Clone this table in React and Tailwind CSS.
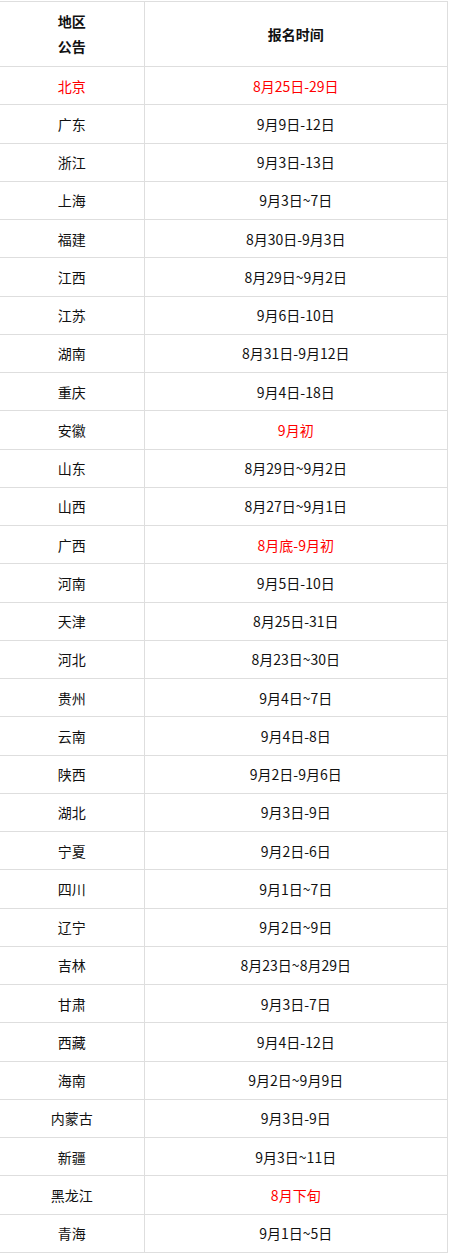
const rows = [
  ['北京', '8月25日-29日', true],
  ['广东', '9月9日-12日'],
  ['浙江', '9月3日-13日'],
  ['上海', '9月3日~7日'],
  ['福建', '8月30日-9月3日'],
  ['江西', '8月29日~9月2日'],
  ['江苏', '9月6日-10日'],
  ['湖南', '8月31日-9月12日'],
  ['重庆', '9月4日-18日'],
  ['安徽', '9月初', 'date'],
  ['山东', '8月29日~9月2日'],
  ['山西', '8月27日~9月1日'],
  ['广西', '8月底-9月初', 'date'],
  ['河南', '9月5日-10日'],
  ['天津', '8月25日-31日'],
  ['河北', '8月23日~30日'],
  ['贵州', '9月4日~7日'],
  ['云南', '9月4日-8日'],
  ['陕西', '9月2日-9月6日'],
  ['湖北', '9月3日-9日'],
  ['宁夏', '9月2日-6日'],
  ['四川', '9月1日~7日'],
  ['辽宁', '9月2日~9日'],
  ['吉林', '8月23日~8月29日'],
  ['甘肃', '9月3日-7日'],
  ['西藏', '9月4日-12日'],
  ['海南', '9月2日~9月9日'],
  ['内蒙古', '9月3日-9日'],
  ['新疆', '9月3日~11日'],
  ['黑龙江', '8月下旬', 'date'],
  ['青海', '9月1日~5日'],
]

export default function App() {
  return (
    <div className="bg-white w-[452px] min-h-[1255px] pt-px font-['Noto_Sans_CJK_SC',sans-serif] text-[14px] text-[#111]">
      <table className="w-[448px] border-collapse table-fixed">
        <colgroup>
          <col className="w-[144px]" />
          <col />
        </colgroup>
        <thead>
          <tr className="h-[65px]">
            <th className="border-t border-r border-b border-[#dedede] font-bold leading-[25px] text-center">
              地区<br />公告
            </th>
            <th className="border-t border-r border-b border-[#dedede] font-bold text-center">报名时间</th>
          </tr>
        </thead>
        <tbody>
          {rows.map(([area, date, red]) => (
            <tr key={area} className="h-[38.25px]">
              <td className={`border-r border-b border-[#dedede] text-center pt-px ${red === true ? 'text-[#ff0000]' : ''}`}>{area}</td>
              <td className={`border-r border-b border-[#dedede] text-center pt-px ${red ? 'text-[#ff0000]' : ''}`}>{date}</td>
            </tr>
          ))}
        </tbody>
      </table>
    </div>
  )
}
